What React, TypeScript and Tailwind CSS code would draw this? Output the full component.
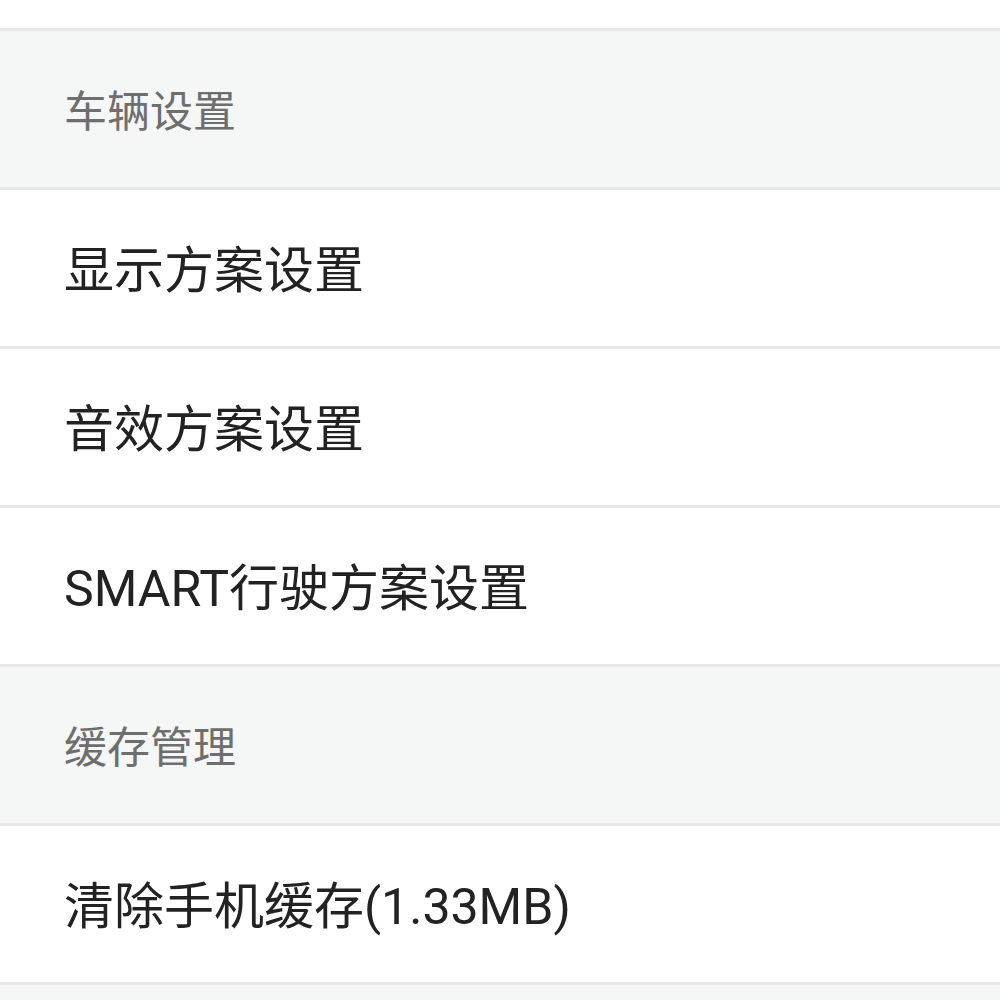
export default function App() {
  const font = { fontFamily: 'Roboto, "Noto Sans CJK SC", sans-serif' };
  const Header = ({ t }: { t: string }) => (
    <div className="h-[150px] bg-[#f5f6f6] flex items-center pl-[64px] pt-[6px] text-[43px] text-[#6e6e6e] border-b-[3px] border-[#e8e8e8] box-content">
      {t}
    </div>
  );
  const Row = ({ t }: { t: string }) => (
    <div className="h-[150px] bg-white flex items-center pl-[64px] pt-[6px] text-[50px] text-[#222222] border-b-[3px] border-[#e8e8e8] box-content">
      {t}
    </div>
  );
  return (
    <div className="w-[1000px] h-[1000px] overflow-hidden bg-[#f5f6f6] leading-none" style={font}>
      <div className="h-[28px] bg-white border-b-[3px] border-[#e8e8e8] box-content" />
      <Header t="车辆设置" />
      <Row t="显示方案设置" />
      <Row t="音效方案设置" />
      <Row t="SMART行驶方案设置" />
      <Header t="缓存管理" />
      <Row t="清除手机缓存(1.33MB)" />
    </div>
  );
}
